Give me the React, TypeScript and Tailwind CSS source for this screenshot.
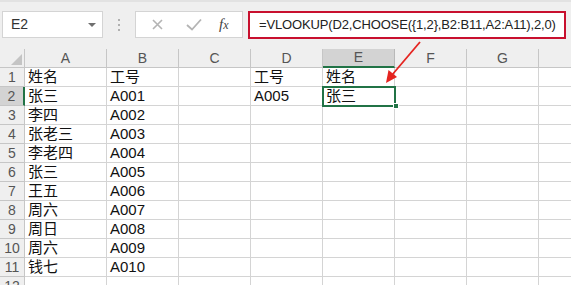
import React from "react";

const cols = ["A", "B", "C", "D", "E", "F", "G", ""];
const colWidths = ["w-[82px]", "w-[72px]", "w-[72px]", "w-[72px]", "w-[72px]", "w-[72px]", "w-[72px]", "w-[40px]"];

const data: string[][] = [
  ["姓名", "工号", "", "工号", "姓名", "", "", ""],
  ["张三", "A001", "", "A005", "张三", "", "", ""],
  ["李四", "A002", "", "", "", "", "", ""],
  ["张老三", "A003", "", "", "", "", "", ""],
  ["李老四", "A004", "", "", "", "", "", ""],
  ["张三", "A005", "", "", "", "", "", ""],
  ["王五", "A006", "", "", "", "", "", ""],
  ["周六", "A007", "", "", "", "", "", ""],
  ["周日", "A008", "", "", "", "", "", ""],
  ["周六", "A009", "", "", "", "", "", ""],
  ["钱七", "A010", "", "", "", "", "", ""],
  ["", "", "", "", "", "", "", ""],
];

const font = { fontFamily: '"Liberation Sans", "Noto Sans CJK SC", sans-serif' };

export default function App() {
  return (
    <div className="relative w-[571px] h-[285px] overflow-hidden bg-white" style={font}>
      {/* formula bar */}
      <div className="h-[49px] bg-[#efefef] border-t-2 border-[#e2e2e2] flex items-start pt-[9px] pl-[2px]">
        <div className="w-[101px] h-[27px] bg-white border border-[#d4d4d4] flex items-center justify-between pl-[8px] pr-[6px]">
          <span className="text-[14px] text-[#333]">E2</span>
          <span className="w-0 h-0 border-l-[4px] border-r-[4px] border-t-[4px] border-l-transparent border-r-transparent border-t-[#6f6f6f]" />
        </div>
        <div className="w-[32px] h-[27px] flex flex-col items-center justify-center gap-[3px]">
          <span className="w-[2px] h-[2px] bg-[#b0b0b0]" />
          <span className="w-[2px] h-[2px] bg-[#b0b0b0]" />
          <span className="w-[2px] h-[2px] bg-[#b0b0b0]" />
        </div>
        <div className="w-[108px] h-[27px] bg-white border border-[#d4d4d4] flex items-center">
          <svg width="36" height="27" viewBox="0 0 36 27" className="ml-[4px]">
            <path d="M13 9 L22 18 M22 9 L13 18" stroke="#b4b4b4" strokeWidth="1.6" fill="none" />
          </svg>
          <svg width="36" height="27" viewBox="0 0 36 27">
            <path d="M11 14 L16 18.5 L25 8.5" stroke="#b4b4b4" strokeWidth="1.8" fill="none" />
          </svg>
          <span className="ml-[7px] italic text-[15px] text-[#444]" style={{ fontFamily: '"Liberation Serif", serif' }}>
            f<span className="text-[12px]">x</span>
          </span>
        </div>
        <div className="ml-[5px] w-[318px] h-[28px] bg-white border-2 border-[#c8102e] flex items-center pl-[9px]">
          <span className="text-[13px] text-[#222] whitespace-nowrap tracking-[-0.15px]">
            =VLOOKUP(D2,CHOOSE({"{"}1,2{"}"},B2:B11,A2:A11),2,0)
          </span>
        </div>
      </div>

      {/* sheet */}
      <div className="flex flex-col">
        <div className="flex h-[19px]">
          <div className="w-[25px] h-[19px] shrink-0 bg-[#efefef] border-r border-b border-[#c6c6c6] relative">
            <svg className="absolute right-[2px] bottom-[2px]" width="11" height="11" viewBox="0 0 11 11">
              <path d="M11 0 L11 11 L0 11 Z" fill="#c4c4c4" />
            </svg>
          </div>
          {cols.map((c, i) => (
            <div
              key={i}
              className={`${colWidths[i]} h-[19px] shrink-0 flex items-center justify-center text-[14px] text-[#555] border-r ${
                c === "E" ? "bg-[#d3d3d3] border-b-2 border-b-[#217346] border-r-[#b8b8b8]" : "bg-[#efefef] border-b border-[#c6c6c6]"
              }`}
            >
              {c}
            </div>
          ))}
        </div>
        {data.map((row, r) => (
          <div key={r} className="flex h-[19px]">
            <div
              className={`w-[25px] h-[19px] shrink-0 flex items-center justify-center text-[14px] text-[#555] border-b border-[#c6c6c6] ${
                r === 1 ? "bg-[#d3d3d3] border-r-2 border-r-[#217346]" : "bg-[#efefef] border-r"
              }`}
            >
              {r + 1}
            </div>
            {row.map((v, i) => (
              <div
                key={i}
                className={`${colWidths[i]} h-[19px] shrink-0 border-r border-b border-[#d4d4d4] flex items-center pl-[3px] text-[15px] text-[#111] whitespace-nowrap`}
              >
                {v}
              </div>
            ))}
          </div>
        ))}
      </div>

      {/* selected cell E2 */}
      <div className="absolute left-[322px] top-[86px] w-[74px] h-[21px] border-2 border-[#217346]" />
      <div className="absolute left-[393px] top-[103px] w-[6px] h-[6px] bg-[#217346] border border-white" />

      {/* arrow */}
      <svg className="absolute left-0 top-0 pointer-events-none" width="571" height="285">
        <line x1="420" y1="42" x2="392" y2="75" stroke="#e52420" strokeWidth="1.8" />
        <path d="M386 83 L388.5 70 L397 77 Z" fill="#e52420" />
      </svg>
    </div>
  );
}
